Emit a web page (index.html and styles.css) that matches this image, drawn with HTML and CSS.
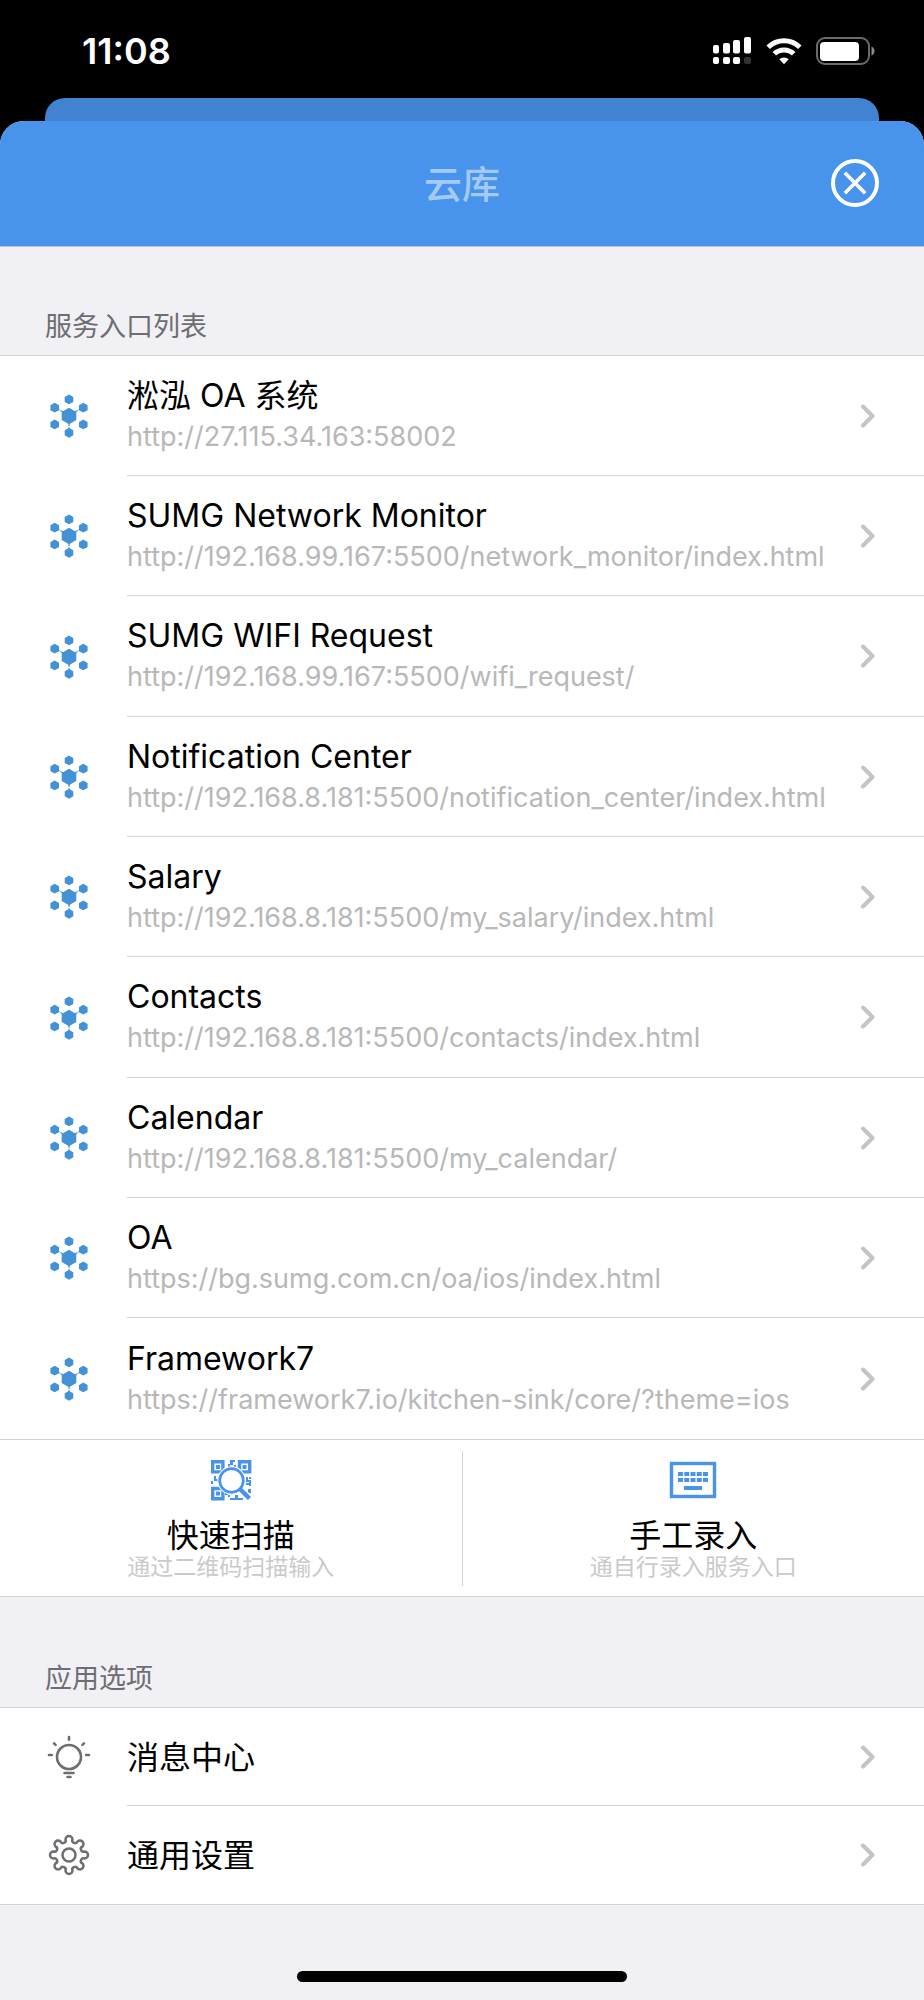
FILE: index.html
```html
<!DOCTYPE html>
<html lang="zh-CN">
<head>
<meta charset="utf-8">
<meta name="viewport" content="width=device-width, initial-scale=1">
<title>云库</title>
<link rel="stylesheet" href="styles.css">
</head>
<body>
<svg class="sprite" aria-hidden="true">
  <symbol id="hub" viewBox="-24 -24 48 48">
    <path fill="none" stroke="currentColor" stroke-width="1.2" stroke-dasharray="3 1" d="M0 7V13M-6-4l-6-3.500M6-4l6-3.500"/>
    <path fill="currentColor" d="M0-8.300l7.300 4.200v8.200L0 8.300l-7.300-4.200v-8.200z"/>
    <g fill="currentColor">
      <path id="cell" d="M0-21.500l4.300 2.400v5L0-11.700l-4.300-2.400v-5z"/>
      <use href="#cell" y="33.400"/>
      <use href="#cell" x="-14.300" y="8.300"/>
      <use href="#cell" x="14.300" y="8.300"/>
      <use href="#cell" x="-14.300" y="25"/>
      <use href="#cell" x="14.300" y="25"/>
    </g>
  </symbol>
  <symbol id="chevron" viewBox="0 0 16 24">
    <path fill="none" stroke="currentColor" stroke-width="4" stroke-linecap="round" stroke-linejoin="round" d="M3 2.500l9.500 9.500L3 21.500"/>
  </symbol>
</svg>

<div class="status-bar">
  <time class="clock">11:08</time>
  <div class="status-icons">
    <svg width="40" height="28" viewBox="0 0 40 28" fill="#fff" aria-hidden="true">
      <rect x="1" y="8" width="6" height="8.500" rx="2"/><rect x="11" y="6" width="7" height="10.500" rx="2"/><rect x="21" y="3" width="7" height="13.500" rx="2"/><rect x="32" y="0" width="7" height="16.500" rx="2"/>
      <rect x="1" y="20" width="6" height="7" rx="2"/><rect x="11" y="20" width="7" height="7" rx="2"/><rect x="21" y="20" width="7" height="7" rx="2"/><rect x="32" y="20" width="7" height="7" rx="2" fill="#333"/>
    </svg>
    <svg width="36" height="28" viewBox="0 0 36 28" aria-hidden="true">
      <g fill="none" stroke="#fff" stroke-width="5"><path d="M2.200 10.300a22.500 22.500 0 0 1 31.600 0"/><path d="M8.300 16.800a14 14 0 0 1 19.400 0"/></g>
      <path fill="#fff" d="M18 27.300l-4.700-5a7 7 0 0 1 9.400 0z"/>
    </svg>
    <svg width="60" height="28" viewBox="0 0 60 28" aria-hidden="true">
      <rect x="1" y="1" width="52" height="26" rx="8" fill="none" stroke="#6b6b6b" stroke-width="2"/>
      <rect x="4" y="5" width="39" height="19" rx="4" fill="#fff"/>
      <path fill="#8a8a8a" d="M55.500 9.500q3 1.500 3 4.500t-3 4.500z"/>
    </svg>
  </div>
</div>
<div class="stack"><div class="back-card"></div></div>

<main class="sheet">
  <header class="nav">
    <h1>云库</h1>
    <button class="close" type="button" aria-label="关闭">
      <svg width="50" height="50" viewBox="0 0 50 50" fill="none" stroke="#fff" stroke-width="4" aria-hidden="true"><circle cx="25" cy="24" r="22"/><path stroke-width="3.600" d="M14.800 13.800l20.400 20.400M35.200 13.800L14.800 34.200"/></svg>
    </button>
  </header>

  <section>
    <h2>服务入口列表</h2>
    <ul class="list services">
      <li><a class="row" href="#"><svg class="icon hub"><use href="#hub"/></svg><span class="body"><span class="text"><span class="name">淞泓 OA 系统</span><span class="url">http://27.115.34.163:58002</span></span><svg class="chevron"><use href="#chevron"/></svg></span></a></li>
      <li><a class="row" href="#"><svg class="icon hub"><use href="#hub"/></svg><span class="body"><span class="text"><span class="name">SUMG Network Monitor</span><span class="url">http://192.168.99.167:5500/network_monitor/index.html</span></span><svg class="chevron"><use href="#chevron"/></svg></span></a></li>
      <li><a class="row" href="#"><svg class="icon hub"><use href="#hub"/></svg><span class="body"><span class="text"><span class="name">SUMG WIFI Request</span><span class="url">http://192.168.99.167:5500/wifi_request/</span></span><svg class="chevron"><use href="#chevron"/></svg></span></a></li>
      <li><a class="row" href="#"><svg class="icon hub"><use href="#hub"/></svg><span class="body"><span class="text"><span class="name">Notification Center</span><span class="url">http://192.168.8.181:5500/notification_center/index.html</span></span><svg class="chevron"><use href="#chevron"/></svg></span></a></li>
      <li><a class="row" href="#"><svg class="icon hub"><use href="#hub"/></svg><span class="body"><span class="text"><span class="name">Salary</span><span class="url">http://192.168.8.181:5500/my_salary/index.html</span></span><svg class="chevron"><use href="#chevron"/></svg></span></a></li>
      <li><a class="row" href="#"><svg class="icon hub"><use href="#hub"/></svg><span class="body"><span class="text"><span class="name">Contacts</span><span class="url">http://192.168.8.181:5500/contacts/index.html</span></span><svg class="chevron"><use href="#chevron"/></svg></span></a></li>
      <li><a class="row" href="#"><svg class="icon hub"><use href="#hub"/></svg><span class="body"><span class="text"><span class="name">Calendar</span><span class="url">http://192.168.8.181:5500/my_calendar/</span></span><svg class="chevron"><use href="#chevron"/></svg></span></a></li>
      <li><a class="row" href="#"><svg class="icon hub"><use href="#hub"/></svg><span class="body"><span class="text"><span class="name">OA</span><span class="url">https://bg.sumg.com.cn/oa/ios/index.html</span></span><svg class="chevron"><use href="#chevron"/></svg></span></a></li>
      <li><a class="row" href="#"><svg class="icon hub"><use href="#hub"/></svg><span class="body"><span class="text"><span class="name">Framework7</span><span class="url">https://framework7.io/kitchen-sink/core/?theme=ios</span></span><svg class="chevron"><use href="#chevron"/></svg></span></a></li>
    </ul>
    <div class="actions">
      <button class="action" type="button">
        <svg width="48" height="42" viewBox="-4 -1 48 42" aria-hidden="true">
          <g fill="none" stroke="#4893ec" stroke-width="3.400"><path d="M1.700 1.700h10.200v10.200H1.700zM28.500 1.700h10.200v10.200H28.500zM1.700 28.500h10.200v10.200H1.700z"/></g>
          <path fill="#4893ec" d="M5 5h4v4H5zM31.500 5h4v4h-4zM5 31.500h4v4H5zM19 0h5v2h-2v3h-3zM17 4h2v3h-2zM23 5h2v2h-2zM3 16h2v3h3v2H3zM0 21h2v3H0zM6 20h3v2H6zM35 17h2v3h3v2h-5zM38 17h2v2h-2zM38 22h2v4h-2zM35 23h3v2h-3zM37 29h3v4h-3zM17 35h2v2h-2zM19 38h13v2H19zM24 35h3v3h-3zM14 33h3v2h-3z"/>
          <path stroke="#fff" stroke-width="7" d="M29 29l9 9"/>
          <circle cx="20.500" cy="20.500" r="14.200" fill="#fff"/>
          <circle cx="20.500" cy="20.500" r="11.800" fill="#fff" stroke="#4893ec" stroke-width="2.700"/>
          <path stroke="#4893ec" stroke-width="4.500" d="M28.500 28.500l10 10"/>
        </svg>
        <span class="action-name">快速扫描</span><span class="action-note">通过二维码扫描输入</span>
      </button>
      <button class="action" type="button">
        <svg width="48" height="42" viewBox="0 0 48 42" aria-hidden="true">
          <rect x="2.500" y="4.500" width="43" height="33" fill="none" stroke="#4893ec" stroke-width="3.400"/>
          <path fill="none" stroke="#4893ec" stroke-width="4" stroke-dasharray="5 1.250" d="M9 15h30.500M9 21h30.500"/>
          <path fill="#4893ec" d="M15 27h18v4H15z"/>
        </svg>
        <span class="action-name">手工录入</span><span class="action-note">通自行录入服务入口</span>
      </button>
    </div>
  </section>

  <section class="app-options">
    <h2>应用选项</h2>
    <ul class="list options">
      <li><a class="row" href="#">
        <svg class="icon" viewBox="-24 -24 48 48" fill="none" stroke="currentColor" stroke-width="2.600" stroke-linecap="round" aria-hidden="true"><circle r="12"/><path d="M0-20v2.800M-20-2h2.800M20-2h-2.800M-15-13.700l1.600 1.600M15-13.700l-1.600 1.600M-4.500 16h9M-1.500 20h3"/></svg>
        <span class="body"><span class="label">消息中心</span><svg class="chevron"><use href="#chevron"/></svg></span></a></li>
      <li><a class="row" href="#">
        <svg class="icon" viewBox="-24 -24 48 48" fill="none" stroke="currentColor" stroke-width="2.500" stroke-linejoin="round" aria-hidden="true"><circle r="6.500"/><path d="M-3.500-15.500A3.500 3.500 0 0 1 3.500-15.500A2.700 2.700 0 0 0 8.490-13.440A3.500 3.500 0 0 1 13.440-8.490A2.700 2.700 0 0 0 15.500-3.500A3.500 3.500 0 0 1 15.500 3.500A2.700 2.700 0 0 0 13.440 8.490A3.500 3.500 0 0 1 8.490 13.440A2.700 2.700 0 0 0 3.500 15.500A3.500 3.500 0 0 1-3.500 15.500A2.700 2.700 0 0 0-8.490 13.440A3.500 3.500 0 0 1-13.440 8.490A2.700 2.700 0 0 0-15.500 3.500A3.500 3.500 0 0 1-15.500-3.500A2.700 2.700 0 0 0-13.440-8.490A3.500 3.500 0 0 1-8.490-13.440A2.700 2.700 0 0 0-3.500-15.500z"/></svg>
        <span class="body"><span class="label">通用设置</span><svg class="chevron"><use href="#chevron"/></svg></span></a></li>
    </ul>
  </section>
  <div class="home-area"><div class="home-indicator"></div></div>
</main>
</body>
</html>
```

FILE: styles.css
```css
* {
  box-sizing: border-box;
}

body {
  margin: 0;
  min-height: 100vh;
  display: flex;
  flex-direction: column;
  background: #000;
  color: #000;
  font-family: Inter, "Noto Sans CJK SC", sans-serif;
}

h1,
h2,
ul {
  margin: 0;
  padding: 0;
  font-weight: 400;
  list-style: none;
}

button {
  border: 0;
  padding: 0;
  background: none;
  color: inherit;
  font: inherit;
}

.sprite {
  position: absolute;
  width: 0;
  height: 0;
}

.status-bar {
  display: flex;
  align-items: center;
  justify-content: space-between;
  height: 98px;
  padding: 4px 48px 0 82px;
}

.clock {
  color: #fff;
  font-size: 36px;
  font-weight: 600;
  line-height: 40px;
}

.status-icons {
  display: flex;
  gap: 14px;
}

.stack {
  padding: 0 45px;
  background: #000;
}

.back-card {
  height: 23px;
  border-radius: 20px 20px 0 0;
  background: #4182d1;
}

.sheet {
  flex: 1;
  display: flex;
  flex-direction: column;
  border-radius: 24px 24px 0 0;
  background: #f0f0f5;
}

.nav {
  display: grid;
  grid-template-columns: 1fr auto 1fr;
  align-items: center;
  height: 126px;
  padding: 0 44px;
  border-bottom: 1px solid #bcc3d0;
  border-radius: 24px 24px 0 0;
  background: #4893ec;
}

.nav h1 {
  grid-column: 2;
  color: #a3caf5;
  font-size: 38px;
  font-weight: 500;
  line-height: 48px;
}

.close {
  justify-self: end;
  display: flex;
}

h2 {
  padding: 60px 45px 8px;
  color: #6d6d72;
  font-size: 27px;
  line-height: 40px;
}

.app-options {
  padding-top: 2px;
}

.list {
  border-top: 1px solid #d3d3d7;
  border-bottom: 1px solid #d3d3d7;
  background: #fff;
}

.row {
  display: flex;
  align-items: center;
  gap: 34px;
  height: 100%;
  padding-left: 45px;
  color: inherit;
  text-decoration: none;
}

.icon {
  flex: none;
  width: 48px;
  height: 48px;
  color: #6d6d72;
}

.icon.hub {
  color: #4492d6;
}

.body {
  flex: 1;
  display: flex;
  align-items: center;
  justify-content: space-between;
  align-self: stretch;
  min-width: 0;
  padding-right: 48px;
}

.list li:not(:last-child) .body {
  border-bottom: 1px solid #d3d3d7;
}

.services li {
  height: 120px;
}

.services li:nth-child(3n) {
  height: 121px;
}

.text {
  display: flex;
  flex-direction: column;
  min-width: 0;
  white-space: nowrap;
}

.name,
.url {
  line-height: 41px;
}

.name {
  font-size: 32px;
}

.url {
  color: #b8b8b8;
  font-size: 27px;
}

.chevron {
  flex: none;
  width: 16px;
  height: 24px;
  color: #c4c4c6;
}

.actions {
  display: flex;
  padding: 11px 0 10px;
  border-bottom: 1px solid #d3d3d7;
  background: #fff;
}

.action {
  flex: 1;
  display: flex;
  flex-direction: column;
  align-items: center;
  padding: 8px 0;
}

.action + .action {
  border-left: 1px solid #d3d3d7;
}

.action-name {
  margin-top: 15px;
  font-size: 32px;
  line-height: 40px;
}

.action-note {
  color: #cacaca;
  font-size: 23px;
  line-height: 22px;
}

.options li {
  height: 98px;
}

.label {
  padding-top: 2px;
  font-size: 32px;
  line-height: 40px;
}

.home-area {
  display: flex;
  flex: 1;
  align-items: flex-end;
  justify-content: center;
  padding-bottom: 18px;
}

.home-indicator {
  width: 330px;
  height: 11px;
  border-radius: 6px;
  background: #000;
}
```
